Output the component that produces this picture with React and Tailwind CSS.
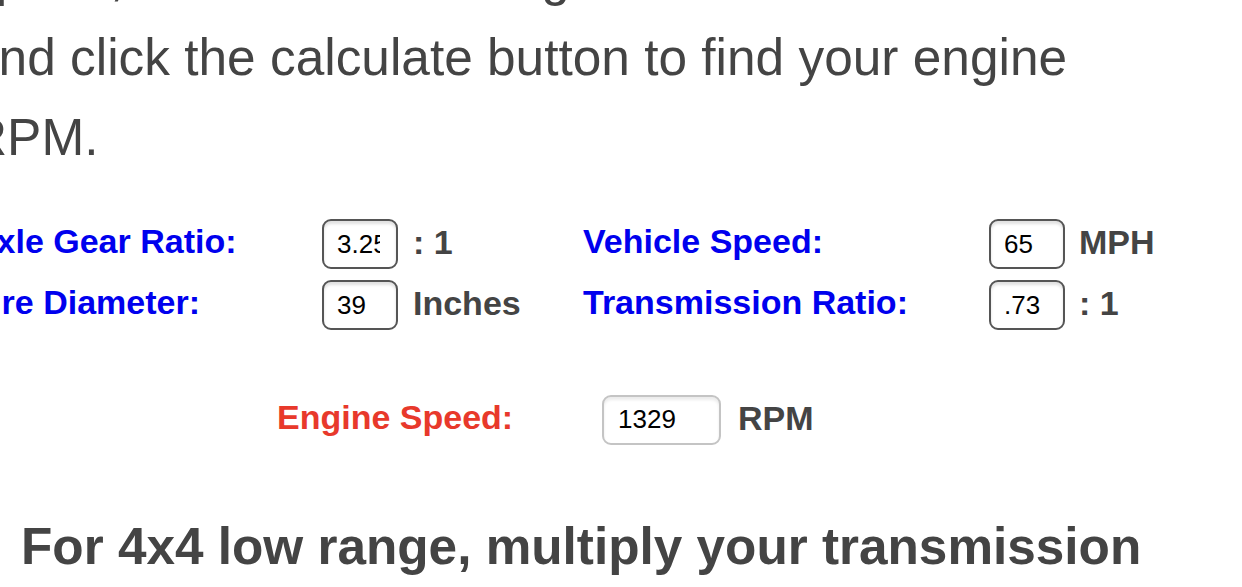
import React from 'react';

const labelBlue = 'text-[34px] font-bold text-[#0000ee] leading-[40px] whitespace-nowrap mb-[6px]';
const unitText = 'text-[34px] font-bold text-[#444] leading-[40px] whitespace-nowrap mb-[4px]';
const boxInput =
  'h-[50px] w-[76px] rounded-[9px] border-2 border-[#555] bg-white pl-[13px] pr-[16px] text-[26px] text-black outline-none shadow-[inset_0_3px_3px_rgba(0,0,0,0.12)]';

function FieldRow({ left, right }) {
  return (
    <div className="flex items-center h-[50px]">
      <div className={`w-[350px] ${labelBlue}`}>{left.label}</div>
      <input className={boxInput} defaultValue={left.value} />
      <div className={`ml-[15px] w-[170px] ${unitText}`}>{left.unit}</div>
      <div className={`w-[406px] ${labelBlue}`}>{right.label}</div>
      <input className={boxInput} defaultValue={right.value} />
      <div className={`ml-[14px] ${unitText}`}>{right.unit}</div>
    </div>
  );
}

export default function App() {
  return (
    <div className="w-[1242px] h-[587px] overflow-hidden bg-white font-['Liberation_Sans',Arial,sans-serif]">
      {/* intro paragraph, scrolled partly out of view */}
      <p className="-ml-[30px] -mt-[63px] w-[1125px] text-[51.4px] leading-[80px] text-[#444]">
        speed, and transmission gear ratio into the form and click the calculate button to find your engine RPM.
      </p>

      {/* calculator */}
      <div className="-ml-[28px] mt-[42px]">
        <FieldRow
          left={{ label: 'Axle Gear Ratio:', value: '3.25', unit: ': 1' }}
          right={{ label: 'Vehicle Speed:', value: '65', unit: 'MPH' }}
        />
        <div className="mt-[11px]">
          <FieldRow
            left={{ label: 'Tire Diameter:', value: '39', unit: 'Inches' }}
            right={{ label: 'Transmission Ratio:', value: '.73', unit: ': 1' }}
          />
        </div>

        <div className="mt-[65px] ml-[305px] flex items-center h-[49px]">
          <div className="w-[325px] mb-[5px] text-[34px] font-bold text-[#e8392b] leading-[40px] whitespace-nowrap">
            Engine Speed:
          </div>
          <input
            className="h-[50px] w-[119px] rounded-[9px] border-2 border-[#c4c4c4] bg-white pl-[14px] text-[26px] text-black outline-none shadow-[inset_0_3px_3px_rgba(0,0,0,0.08)]"
            defaultValue="1329"
            readOnly
          />
          <div className={`ml-[17px] ${unitText}`}>RPM</div>
        </div>
      </div>

      <h2 className="mt-[63px] ml-[21px] text-[51.3px] leading-[80px] font-bold text-[#444] whitespace-nowrap">
        For 4x4 low range, multiply your transmission
      </h2>
    </div>
  );
}
